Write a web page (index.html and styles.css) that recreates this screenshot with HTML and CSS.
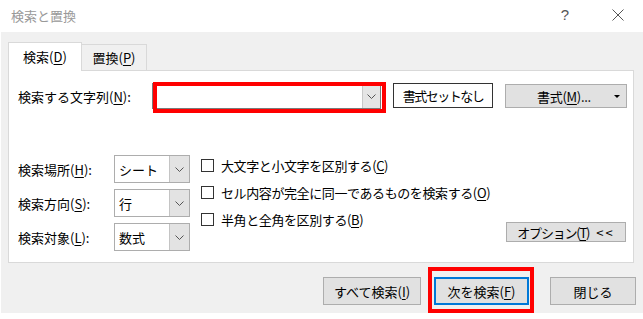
FILE: index.html
```html
<!DOCTYPE html>
<html lang="ja">
<head>
  <meta charset="UTF-8" />
  <title>検索と置換</title>
  <meta name="viewport" content="width=device-width, initial-scale=1.0" />
  <link rel="stylesheet" href="styles.css">
</head>
<body>
  <div class="window">

    <!-- Title bar -->
    <div class="titlebar">
      <span class="title">検索と置換</span>
      <span class="help">?</span>
      <span class="close">
        <svg width="12" height="12" viewBox="0 0 12 12"><path d="M0.5 0.5 L11.5 11.5 M11.5 0.5 L0.5 11.5" stroke="#555" stroke-width="1" fill="none"/></svg>
      </span>
    </div>

    <div class="dialog">
      <!-- Tabs -->
      <div class="tabs">
        <div class="tab active">検索(<u>D</u>)</div>
        <div class="tab">置換(<u>P</u>)</div>
      </div>

      <div class="panel">
        <div class="find-row">
          <span class="find-label">検索する文字列(<u>N</u>):</span>
          <div class="combo">
            <div class="combo-input"></div>
            <div class="combo-btn">
              <svg width="9" height="5" viewBox="0 0 9 5"><path d="M0.5 0.5 L4.5 4.5 L8.5 0.5" stroke="#555" fill="none"/></svg>
            </div>
          </div>
          <button class="btn btn-clear">書式セットなし</button>
          <button class="btn btn-format">書式(<u>M</u>)... <span class="caret"></span></button>
        </div>

        <div class="options">
          <div class="fields">
            <span class="field-label">検索場所(<u>H</u>):</span>
            <div class="select"><span class="select-value">シート</span><span class="select-btn"><svg width="9" height="5" viewBox="0 0 9 5"><path d="M0.5 0.5 L4.5 4.5 L8.5 0.5" stroke="#555" fill="none"/></svg></span></div>
            <span class="field-label">検索方向(<u>S</u>):</span>
            <div class="select"><span class="select-value">行</span><span class="select-btn"><svg width="9" height="5" viewBox="0 0 9 5"><path d="M0.5 0.5 L4.5 4.5 L8.5 0.5" stroke="#555" fill="none"/></svg></span></div>
            <span class="field-label">検索対象(<u>L</u>):</span>
            <div class="select"><span class="select-value">数式</span><span class="select-btn"><svg width="9" height="5" viewBox="0 0 9 5"><path d="M0.5 0.5 L4.5 4.5 L8.5 0.5" stroke="#555" fill="none"/></svg></span></div>
          </div>

          <div class="checks">
            <div class="check"><span class="box"></span>大文字と小文字を区別する(<u>C</u>)</div>
            <div class="check"><span class="box"></span>セル内容が完全に同一であるものを検索する(<u>O</u>)</div>
            <div class="check"><span class="box"></span>半角と全角を区別する(<u>B</u>)</div>
          </div>

          <button class="btn btn-options">オプション(<u>T</u>)<span class="less">&lt;&lt;</span></button>
        </div>
      </div>

      <!-- Bottom buttons -->
      <div class="footer">
        <button class="btn btn-all">すべて検索(<u>I</u>)</button>
        <button class="btn btn-next">次を検索(<u>F</u>)</button>
        <button class="btn btn-close">閉じる</button>
      </div>
    </div>

    <!-- Red annotation boxes -->
    <div class="mark mark-find"></div>
    <div class="mark mark-next"></div>
  </div>
</body>
</html>
```

FILE: styles.css
```css
* { margin: 0; padding: 0; box-sizing: border-box; }
body {
  font-family: "Noto Sans CJK JP", "Noto Sans", sans-serif;
  font-size: 13px;
  color: #000;
  background: #fff;
  overflow: hidden;
}

u { text-decoration: underline; text-underline-offset: 2px; }

.window {
  position: relative;
  width: 643px;
  height: 319px;
}

.titlebar {
  height: 32px;
  display: flex;
  align-items: center;
  padding-left: 11px;
}

.title {
  color: #999;
  line-height: 1;
  margin-top: -2px;
}

.help {
  margin-left: auto;
  color: #555;
  font-family: "Liberation Sans", sans-serif;
  font-size: 15px;
  margin-top: -3px;
}

.close {
  display: flex;
  margin-left: 43px;
  margin-right: 19px;
  margin-top: -3px;
}

.dialog {
  margin-left: 1px;
  height: 281px;
  background: #f0f0f0;
  padding: 10px 9px 0 7px;
}

.tabs {
  display: flex;
  align-items: flex-end;
  height: 28px;
}

.tab {
  height: 26px;
  width: 65px;
  display: flex;
  align-items: center;
  justify-content: center;
  border: 1px solid #d9d9d9;
  border-bottom: none;
  border-left: none;
  background: #f0f0f0;
  line-height: 1;
}

.tab.active {
  position: relative;
  z-index: 1;
  width: 74px;
  height: 29px;
  margin-bottom: -1px;
  background: #fff;
  border-left: 1px solid #d9d9d9;
  padding-bottom: 2px;
}

.panel {
  height: 193px;
  background: #fff;
  border: 1px solid #d9d9d9;
  padding: 12px 0 0 9px;
}

.find-row {
  display: flex;
  align-items: center;
  height: 26px;
}

.find-label { width: 134px; }

.combo {
  width: 229px;
  height: 26px;
  display: flex;
  border: 1px solid #7a7a7a;
  background: #fff;
}

.combo-input { flex: 1; }

.combo-btn {
  width: 18px;
  background: #e5e5e5;
  border-left: 1px solid #c8c8c8;
  display: flex;
  align-items: center;
  justify-content: center;
}

.btn {
  font-family: inherit;
  font-size: 13px;
  color: #000;
  background: #e1e1e1;
  border: 1px solid #adadad;
  display: flex;
  align-items: center;
  justify-content: center;
  line-height: 1;
}

.btn-clear {
  margin-left: 12px;
  width: 100px;
  height: 25px;
  background: #fff;
  border-color: #333;
  margin-top: -1px;
  letter-spacing: -1.5px;
}

.btn-format {
  position: relative;
  margin-left: 12px;
  width: 122px;
  height: 24px;
  padding-right: 4px;
  letter-spacing: -0.3px;
}

.caret {
  position: absolute;
  right: 6px;
  top: 10px;
  border-left: 3px solid transparent;
  border-right: 3px solid transparent;
  border-top: 3px solid #000;
}

.options {
  display: flex;
  margin-top: 46px;
  height: 96px;
}

.fields {
  display: grid;
  grid-template-columns: 96px 76px;
  grid-auto-rows: 28px;
  row-gap: 6px;
  align-items: center;
}

.select {
  height: 28px;
  display: flex;
  border: 1px solid #adadad;
  background: #fff;
}

.select-value {
  flex: 1;
  padding-left: 4px;
  display: flex;
  align-items: center;
}

.select-btn {
  width: 20px;
  background: #e3e3e3;
  border-left: 1px solid #c4c4c4;
  display: flex;
  align-items: center;
  justify-content: center;
}

.checks {
  display: flex;
  flex-direction: column;
  gap: 7px;
  margin-left: 11px;
  letter-spacing: -0.4px;
}

.check {
  display: flex;
  align-items: center;
  height: 20px;
  white-space: nowrap;
}

.box {
  width: 13px;
  height: 13px;
  border: 1px solid #333;
  background: #fff;
  margin-right: 7px;
}

.btn-options {
  margin-left: auto;
  margin-right: 7px;
  align-self: flex-end;
  margin-bottom: 9px;
  width: 120px;
  height: 20px;
  letter-spacing: -1.2px;
}

.less {
  margin-left: 7px;
  letter-spacing: 2px;
}

.footer {
  display: flex;
  justify-content: flex-end;
  margin-top: 14px;
  margin-right: -2px;
}

.footer .btn { height: 28px; }
.btn-all { width: 98px; }
.btn-next {
  width: 95px;
  margin-left: 13px;
  border: 2px solid #0078d7;
}
.btn-close { width: 86px; margin-left: 21px; }

.mark {
  position: absolute;
  border: 4px solid #ff0000;
  pointer-events: none;
}

.mark-find { left: 153px; top: 82px; width: 233px; height: 31px; }
.mark-next { left: 428px; top: 267px; width: 106px; height: 46px; }
```
